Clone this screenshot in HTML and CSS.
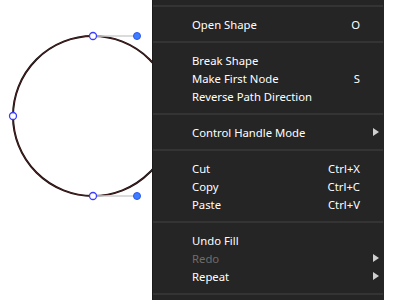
FILE: index.html
```html
<!DOCTYPE html>
<html lang="en">
<head>
  <meta charset="UTF-8">
  <meta name="viewport" content="width=device-width, initial-scale=1.0">
  <title>Node Context Menu</title>
  <link rel="stylesheet" href="styles.css">
</head>
<body>
  <!-- Drawing canvas -->
  <div class="canvas">
    <svg width="152" height="300" viewBox="0 0 152 300">
      <circle cx="93" cy="116" r="80" fill="none" stroke="#140808" stroke-width="2"/>
      <circle cx="93" cy="116" r="80" fill="none" stroke="#9a4a4a" stroke-width="0.4"/>
      <line x1="93" y1="36" x2="137" y2="36" stroke="#cfcfcf" stroke-width="1.5"/>
      <line x1="93" y1="196" x2="137" y2="196" stroke="#cfcfcf" stroke-width="1.5"/>
      <circle class="handle" cx="137" cy="36" r="3.5"/>
      <circle class="handle" cx="137" cy="196" r="3.5"/>
      <circle class="node" cx="93" cy="36" r="3.5"/>
      <circle class="node" cx="13" cy="116" r="3.5"/>
      <circle class="node" cx="93" cy="196" r="3.5"/>
    </svg>
  </div>

  <!-- Context menu -->
  <div class="menu">
    <div class="sep"></div>
    <div class="item"><span>Open Shape</span><span class="key">O</span><span></span></div>
    <div class="sep"></div>
    <div class="item"><span>Break Shape</span><span class="key"></span><span></span></div>
    <div class="item"><span>Make First Node</span><span class="key">S</span><span></span></div>
    <div class="item"><span>Reverse Path Direction</span><span class="key"></span><span></span></div>
    <div class="sep"></div>
    <div class="item"><span>Control Handle Mode</span><span class="key"></span><span class="arrow"></span></div>
    <div class="sep"></div>
    <div class="item"><span>Cut</span><span class="key">Ctrl+X</span><span></span></div>
    <div class="item"><span>Copy</span><span class="key">Ctrl+C</span><span></span></div>
    <div class="item"><span>Paste</span><span class="key">Ctrl+V</span><span></span></div>
    <div class="sep"></div>
    <div class="item"><span>Undo Fill</span><span class="key"></span><span></span></div>
    <div class="item disabled"><span>Redo</span><span class="key"></span><span class="arrow"></span></div>
    <div class="item"><span>Repeat</span><span class="key"></span><span class="arrow"></span></div>
    <div class="sep"></div>
  </div>
</body>
</html>
```

FILE: styles.css
```css
body {
  margin: 0;
  background: #fff;
  font-family: 'Noto Sans', 'Open Sans', sans-serif;
  display: flex;
  height: 300px;
  overflow: hidden;
}

/* Canvas with the shape */
.canvas {
  width: 152px;
  flex-shrink: 0;
}

.canvas svg {
  display: block;
}

.node {
  fill: #fff;
  stroke: #3c3cff;
  stroke-width: 1.3;
}

.handle {
  fill: #3d7dff;
  stroke: #2d55f0;
  stroke-width: 1;
}

/* Context menu */
.menu {
  width: 231px;
  flex-shrink: 0;
  background: #252525;
  border-left: 1px solid #1a1a1a;
  margin-top: -3px;
  display: flex;
  flex-direction: column;
}

.item {
  height: 18px;
  flex-shrink: 0;
  display: grid;
  grid-template-columns: 1fr auto 24px;
  align-items: center;
  padding-left: 39px;
  font-size: 11.3px;
  color: #fff;
}

.item.disabled {
  color: #6d6d6d;
}

.key {
  text-align: right;
}

.arrow {
  width: 0;
  height: 0;
  margin-left: 13px;
  border-top: 4px solid transparent;
  border-bottom: 4px solid transparent;
  border-left: 6px solid #cfcfcf;
}

.sep {
  height: 18px;
  flex-shrink: 0;
  display: flex;
  align-items: center;
  padding: 0 1px 0 0;
}

.sep::before {
  content: '';
  flex: 1;
  height: 2px;
  background: #343434;
}
```
